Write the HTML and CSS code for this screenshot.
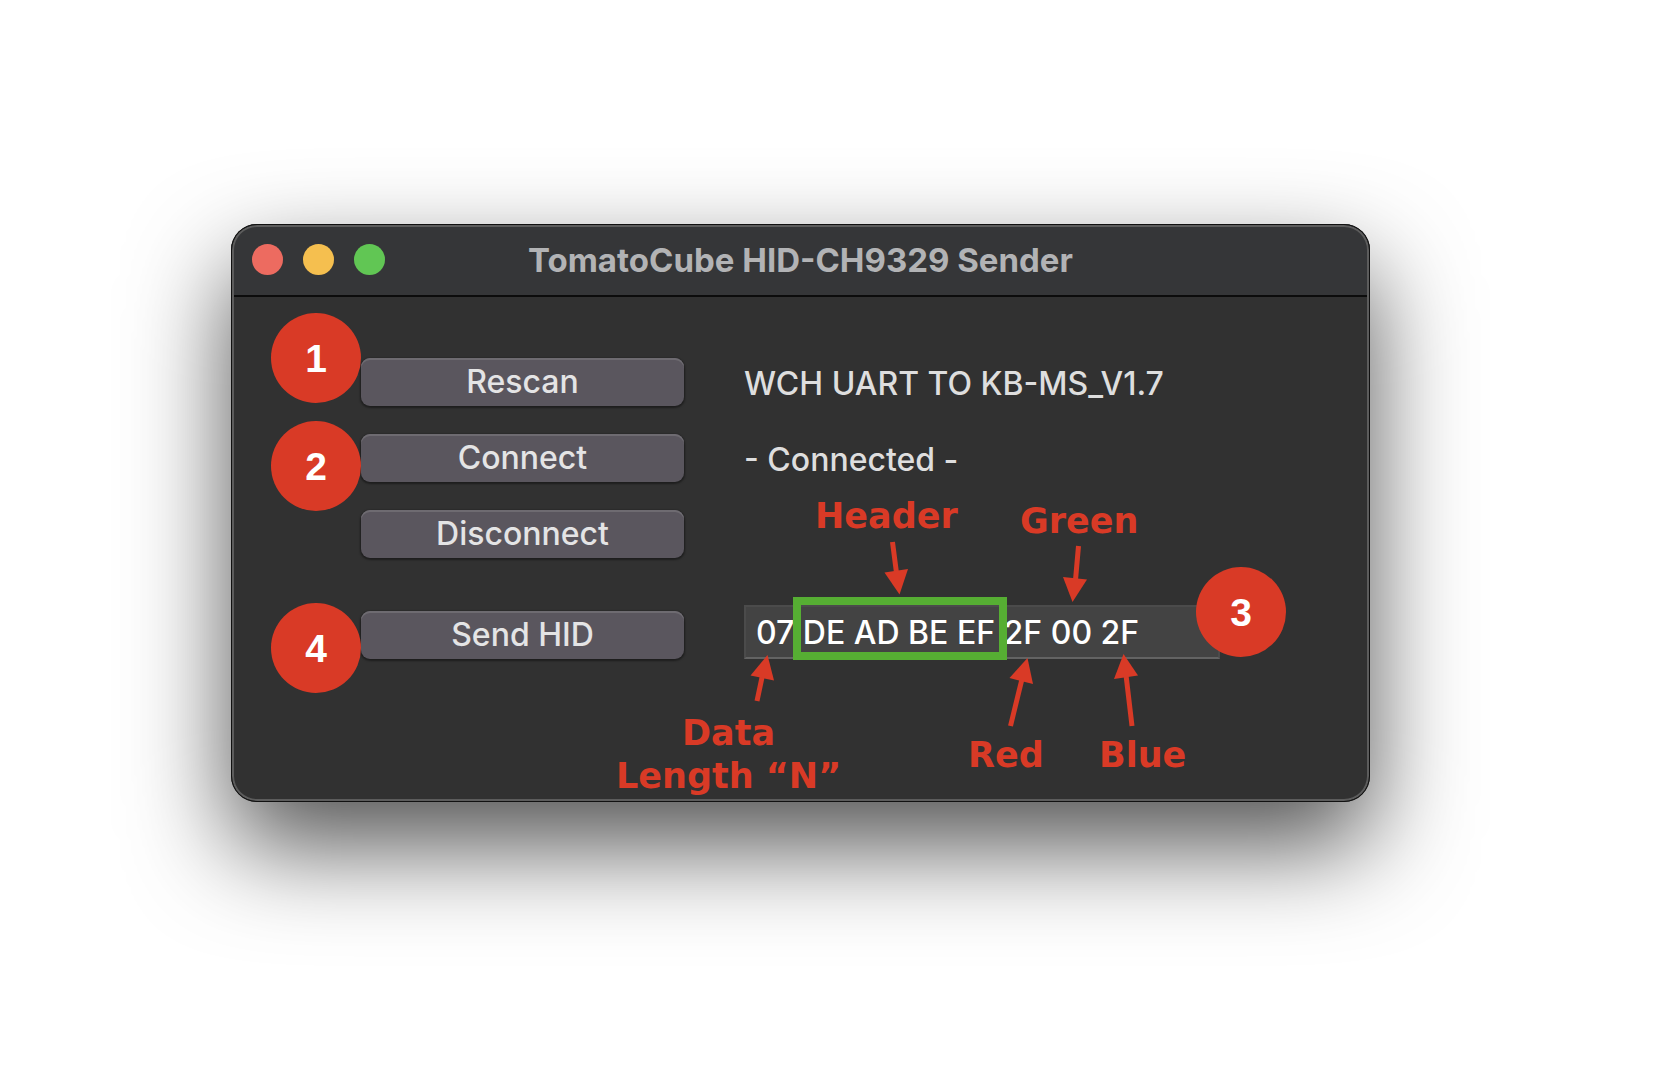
FILE: index.html
```html
<!DOCTYPE html>
<html lang="en">
<head>
  <meta charset="utf-8">
  <title>TomatoCube HID-CH9329 Sender</title>
  <link rel="stylesheet" href="styles.css">
</head>
<body>
  <main class="window">
    <header class="titlebar">
      <div class="lights">
        <button class="light light-close" type="button" aria-label="Close"></button>
        <button class="light light-minimize" type="button" aria-label="Minimize"></button>
        <button class="light light-zoom" type="button" aria-label="Zoom"></button>
      </div>
      <h1 class="title">TomatoCube HID-CH9329 Sender</h1>
    </header>
    <form class="panel">
      <div class="row">
        <button class="push" type="button">Rescan</button>
        <output class="status">WCH UART TO KB-MS_V1.7</output>
      </div>
      <div class="row">
        <button class="push" type="button">Connect</button>
        <output class="status">- Connected -</output>
      </div>
      <div class="row">
        <button class="push" type="button">Disconnect</button>
      </div>
      <div class="row row-send">
        <button class="push" type="button">Send HID</button>
        <input class="field" type="text" aria-label="HID data" value="07 DE AD BE EF 2F 00 2F">
      </div>
    </form>

    <!-- Callouts laid over the window -->
    <div class="frame"></div>
    <svg class="arrows" width="1139" height="578" viewBox="231 224 1139 578" aria-hidden="true">
      <g stroke="#d93a26" stroke-width="5">
        <path d="M892.500 542L896.500 573M1078.500 546L1075.500 580M757 701L762.500 675M1010.500 726L1022 679M1132 726L1126 675"/>
      </g>
      <g fill="#d93a26">
        <path d="M884.500 572.500L908 569L899.500 594.500Z"/>
        <path d="M1063 577L1087 579.500L1072.500 602Z"/>
        <path d="M750.500 675.500L774 680.500L767.500 655Z"/>
        <path d="M1009.500 678L1033 684L1027.500 658Z"/>
        <path d="M1114 679L1138 675.500L1123.500 654Z"/>
      </g>
    </svg>
    <span class="note note-header">Header</span>
    <span class="note note-green">Green</span>
    <span class="note note-length">Data<br>Length “N”</span>
    <span class="note note-red">Red</span>
    <span class="note note-blue">Blue</span>
    <span class="badge badge-1">1</span>
    <span class="badge badge-2">2</span>
    <span class="badge badge-3">3</span>
    <span class="badge badge-4">4</span>
  </main>
</body>
</html>
```

FILE: styles.css
```css
* {
  box-sizing: border-box;
}

body {
  min-height: 100vh;
  margin: 0;
  padding: 224px 286px 120px 231px;
  background: #fff;
  font-family: Inter, "Liberation Sans", sans-serif;
  font-size: 32px;
  font-weight: 500;
}

.window {
  position: relative;
  border-radius: 26px;
  background: #313131;
  box-shadow: 0 44px 100px rgba(0, 0, 0, 0.68);
}

/* Dark outline with a light rim inside it */
.window::after {
  content: "";
  position: absolute;
  inset: 0;
  border: 1px solid #111;
  border-radius: 26px;
  box-shadow: inset 0 0 0 2px #5c5c5c;
  pointer-events: none;
}

.titlebar {
  display: grid;
  grid-template-columns: 1fr auto 1fr;
  align-items: center;
  height: 73px;
  padding: 0 21px;
  border-bottom: 2px solid #0c0c0c;
  border-radius: 26px 26px 0 0;
  background: #353638;
}

.lights {
  display: flex;
  gap: 20px;
}

.light {
  width: 31px;
  height: 31px;
  padding: 0;
  border: 0;
  border-radius: 50%;
}

.light-close { background: #ed6b60; }
.light-minimize { background: #f5bf4f; }
.light-zoom { background: #61c654; }

.title {
  margin: 0;
  font-size: 33px;
  line-height: 40px;
  font-weight: 700;
  color: #b2b3b5;
}

.panel {
  display: flex;
  flex-direction: column;
  gap: 28px;
  padding: 61px 150px 143px 130px;
}

.row {
  display: grid;
  grid-template-columns: 323px 1fr;
  column-gap: 60px;
  align-items: center;
}

.row-send {
  align-items: end;
  margin-top: 19px;
}

.push {
  height: 48px;
  padding: 0;
  border: 0;
  border-radius: 9px;
  background: #5a565e;
  box-shadow: inset 0 2px 0 #6e6b71, 0 1px 2px 1px rgba(0, 0, 0, 0.4);
  font: inherit;
  line-height: 46px;
  color: #e4e4e5;
}

.status {
  padding-top: 4px;
  line-height: 40px;
  color: #dedede;
  white-space: nowrap;
}

.field {
  width: 100%;
  height: 54px;
  padding: 0 10px;
  border: 2px solid #4b4b4b;
  border-bottom-color: #636363;
  background: #434343;
  font: inherit;
  color: #fff;
}

.frame {
  position: absolute;
  top: 373px;
  left: 562px;
  width: 214px;
  height: 63px;
  border: 8px solid #56ae33;
}

.arrows {
  position: absolute;
  top: 0;
  left: 0;
}

.note {
  position: absolute;
  font-family: "DejaVu Sans", sans-serif;
  font-size: 35px;
  line-height: 43px;
  font-weight: 700;
  text-align: center;
  color: #d93a26;
  white-space: nowrap;
}

.note-header { top: 271px; left: 584px; }
.note-green { top: 276px; left: 789px; }
.note-length { top: 488px; left: 385px; }
.note-red { top: 510px; left: 737px; }
.note-blue { top: 510px; left: 868px; }

.badge {
  position: absolute;
  width: 90px;
  height: 90px;
  border-radius: 50%;
  background: #d93a26;
  font-family: "Liberation Sans", sans-serif;
  font-size: 39px;
  line-height: 92px;
  font-weight: 700;
  text-align: center;
  color: #fff;
}

.badge-1 { top: 89px; left: 40px; }
.badge-2 { top: 197px; left: 40px; }
.badge-3 { top: 343px; left: 965px; }
.badge-4 { top: 379px; left: 40px; }
```
